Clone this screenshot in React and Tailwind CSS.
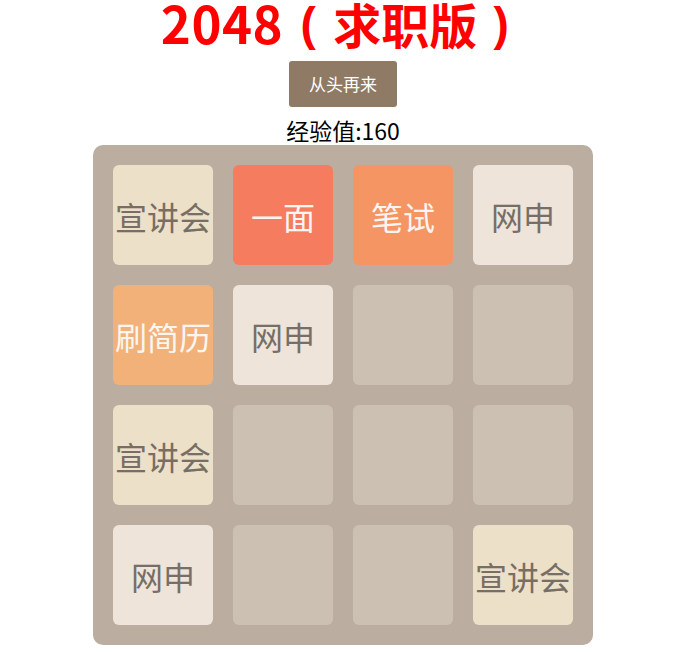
const tiles = [
  ['宣讲会', 'bg-[#ede0c8] text-[#776e65]'],
  ['一面', 'bg-[#f67c5f] text-[#f9f6f2]'],
  ['笔试', 'bg-[#f59563] text-[#f9f6f2]'],
  ['网申', 'bg-[#eee4da] text-[#776e65]'],
  ['刷简历', 'bg-[#f2b179] text-[#f9f6f2]'],
  ['网申', 'bg-[#eee4da] text-[#776e65]'],
  null,
  null,
  ['宣讲会', 'bg-[#ede0c8] text-[#776e65]'],
  null,
  null,
  null,
  ['网申', 'bg-[#eee4da] text-[#776e65]'],
  null,
  null,
  ['宣讲会', 'bg-[#ede0c8] text-[#776e65]'],
]

export default function App() {
  return (
    <div
      className="w-[686px] flex flex-col items-center bg-white"
      style={{ fontFamily: '"Noto Sans CJK SC", "Liberation Sans", sans-serif' }}
    >
      <h1 className="m-0 h-[44px] text-[48px] leading-[44px] font-bold text-[#ff0000] whitespace-nowrap">
        <span className="text-[51px] leading-[44px] tracking-[0.5px]">2048</span>
        <span className="inline-block w-[50px] text-center font-['Liberation_Sans'] text-[46px] leading-[44px] -translate-y-[4px]">(</span>
        求职版
        <span className="inline-block w-[48px] text-center font-['Liberation_Sans'] text-[46px] leading-[44px] -translate-y-[4px]">)</span>
      </h1>
      <button className="mt-[17px] w-[108px] h-[46px] rounded-[3px] bg-[#8f7a66] text-white text-[17px]">
        从头再来
      </button>
      <div className="mt-[8px] text-[23px] leading-[30px] text-black">经验值:160</div>
      <div className="w-[500px] h-[500px] rounded-[10px] bg-[#bbada0] p-[20px] grid grid-cols-4 gap-[20px]">
        {tiles.map((t, i) =>
          t ? (
            <div
              key={i}
              className={`w-[100px] h-[100px] rounded-[6px] flex items-center justify-center pt-[1px] text-[32px] leading-none whitespace-nowrap ${t[1]}`}
            >
              {t[0]}
            </div>
          ) : (
            <div key={i} className="w-[100px] h-[100px] rounded-[6px] bg-[#ccc0b3]" />
          )
        )}
      </div>
    </div>
  )
}
